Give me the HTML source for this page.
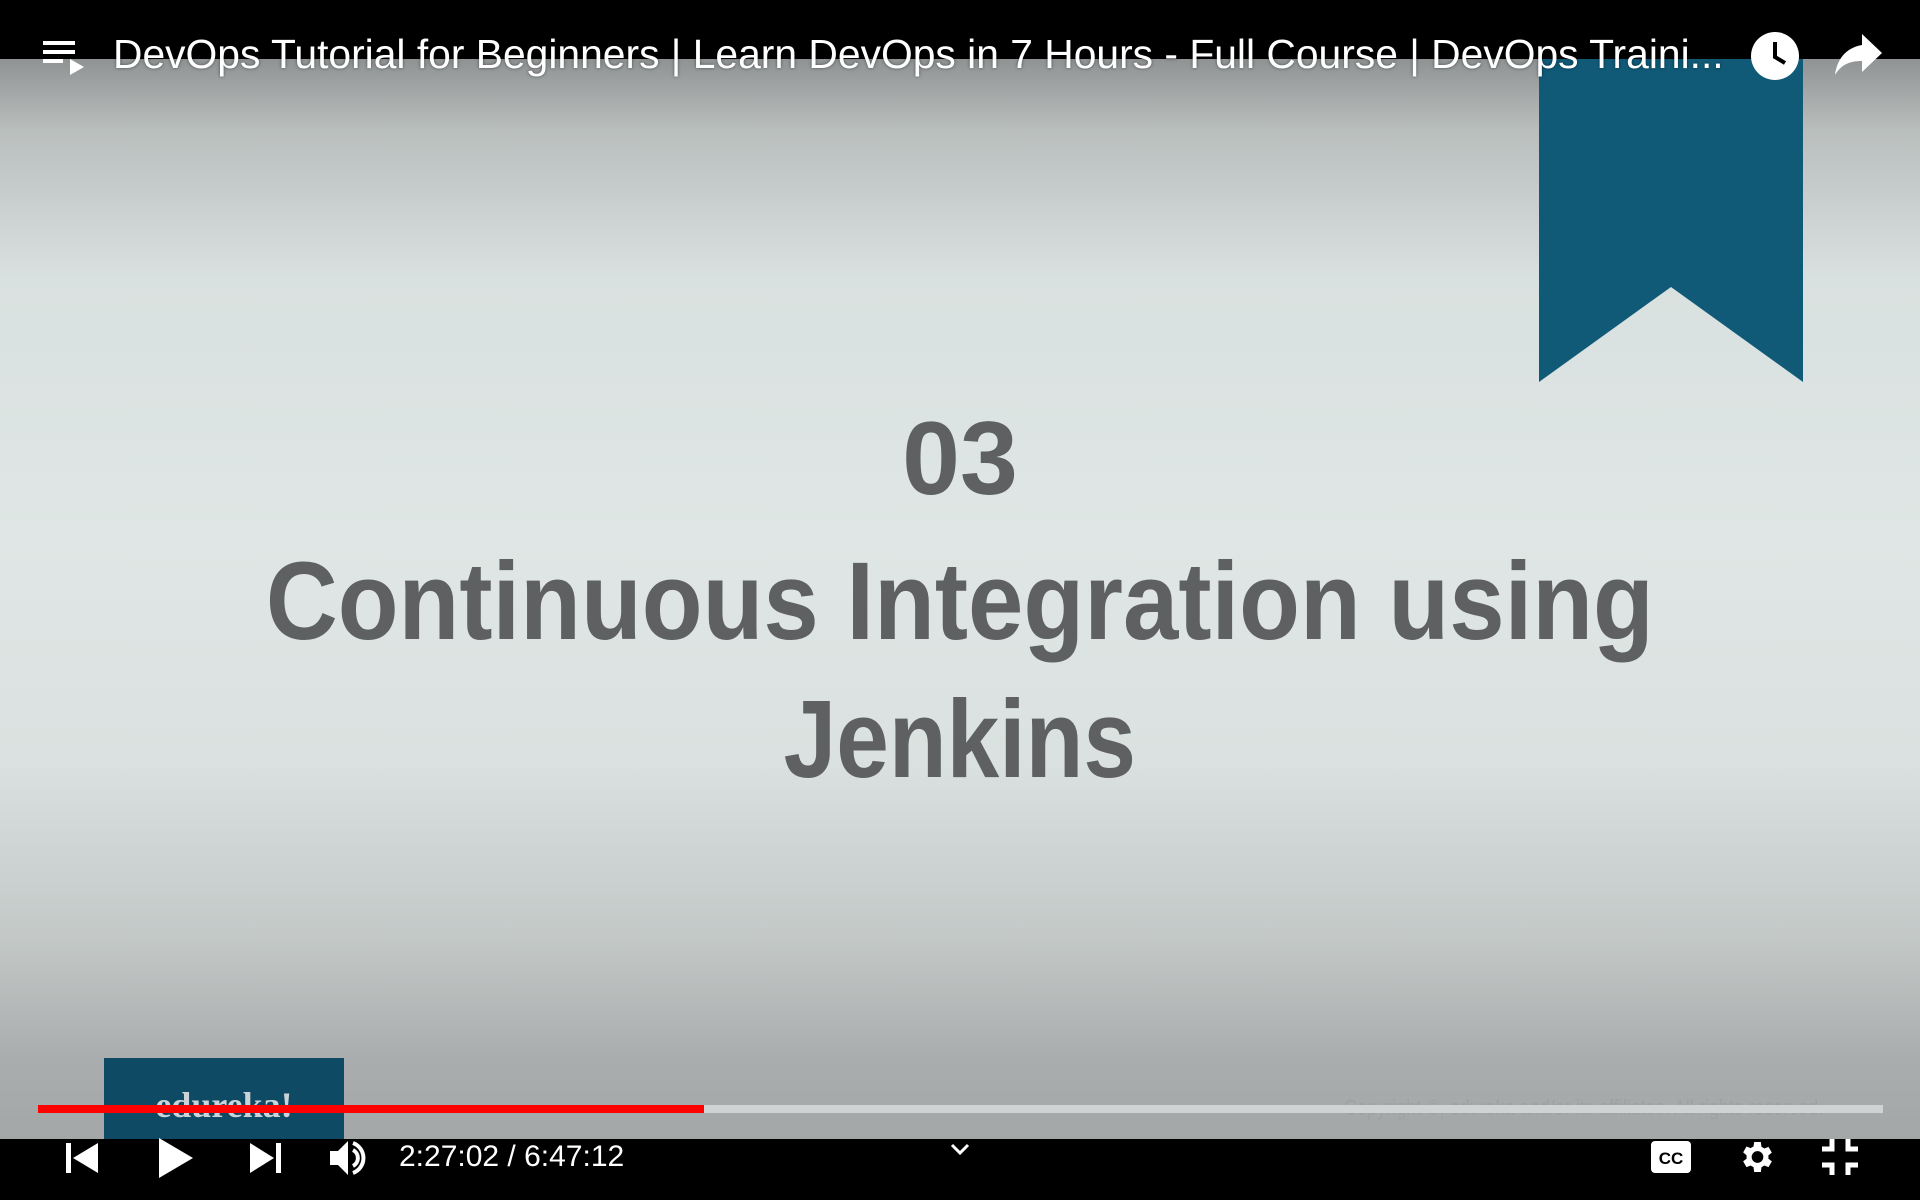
<!DOCTYPE html>
<html><head><meta charset="utf-8"><style>
html,body{margin:0;padding:0;width:1920px;height:1200px;overflow:hidden;background:#000;font-family:"Liberation Sans",sans-serif}
#vid{position:absolute;left:0;top:59px;width:1920px;height:1080px;background:linear-gradient(#8f9393 0px,#b9bebd 70px,#d9e1e0 220px,#dfe6e5 480px,#dae1e0 700px,#c3c8c7 880px,#a9adad 1000px,#a3a7a7 1080px)}
.t{position:absolute;left:0;width:1920px;text-align:center;color:#5e6062;font-weight:bold}
.t span{display:inline-block}
.w{fill:#fff}
</style></head><body>
<div id="vid">
 <svg style="position:absolute;left:1539px;top:0" width="264" height="324"><polygon points="0,0 264,0 264,323 132,228 0,323" fill="#105a78"/></svg>
 <div class="t" style="top:340px;font-size:104px;line-height:120px"><span style="transform:scaleX(1)">03</span></div>
 <div class="t" style="top:478px;font-size:110px;line-height:130px"><span style="transform:scaleX(.905)">Continuous Integration using</span></div>
 <div class="t" style="top:616px;font-size:110px;line-height:130px"><span style="transform:scaleX(.86)">Jenkins</span></div>
 <div style="position:absolute;left:104px;top:999px;width:240px;height:81px;background:#0e4a64;color:#c9d3d8;font-size:36px;font-weight:bold;font-family:'Liberation Serif',serif;text-align:center;padding-top:26px;box-sizing:border-box;overflow:hidden">edureka!</div>
 <div style="position:absolute;left:1344px;top:1036px;color:#9ea2a2;font-size:22px;white-space:nowrap;transform:scaleX(.82);transform-origin:left">Copyright ©, edureka and/or its affiliates. All rights reserved.</div>
 <div style="position:absolute;left:38px;top:1046px;width:1845px;height:8px;background:#cfd3d3"></div>
 <div style="position:absolute;left:38px;top:1046px;width:666px;height:8px;background:#f00"></div>
</div>
<svg style="position:absolute;left:42px;top:38px" width="46" height="44"><rect class="w" x="1" y="3" width="32" height="4"/><rect class="w" x="1" y="12" width="32" height="4"/><rect class="w" x="1" y="21" width="20" height="4"/><polygon class="w" points="28,21 42,29 28,37"/></svg>
<div style="position:absolute;left:113px;top:31px;color:#fff;font-size:40.8px;white-space:nowrap;text-shadow:0 0 3px rgba(0,0,0,.5)">DevOps Tutorial for Beginners | Learn DevOps in 7 Hours - Full Course | DevOps Traini...</div>
<svg style="position:absolute;left:1750px;top:31px" width="50" height="50"><circle cx="25" cy="25" r="24" fill="#fff"/><path d="M25 11v15l10 6" stroke="#000" stroke-width="4" fill="none"/></svg>
<svg style="position:absolute;left:1834px;top:32px" width="50" height="46"><path class="w" d="M28 2l20 19-20 19V29C15 29 7 33 1 43 3 28 11 16 28 13z"/></svg>
<svg style="position:absolute;left:64px;top:1141px" width="40" height="34"><rect class="w" x="2" y="2" width="5" height="30"/><polygon class="w" points="34,2 34,32 9,17"/></svg>
<svg style="position:absolute;left:157px;top:1136px" width="40" height="44"><polygon class="w" points="2,2 36,22 2,42"/></svg>
<svg style="position:absolute;left:248px;top:1141px" width="40" height="34"><polygon class="w" points="2,2 2,32 26,17"/><rect class="w" x="28" y="2" width="5" height="30"/></svg>
<svg style="position:absolute;left:328px;top:1139px" width="40" height="38"><polygon class="w" points="2,12 10,12 20,2 20,36 10,26 2,26"/><path d="M25 11a9 9 0 0 1 0 16M25 4a16 16 0 0 1 0 30" stroke="#fff" stroke-width="4" fill="none"/></svg>
<div style="position:absolute;left:399px;top:1140px;color:#fff;font-size:30px">2:27:02 / 6:47:12</div>
<svg style="position:absolute;left:950px;top:1143px" width="20" height="14"><path d="M2 2l8 8 8-8" stroke="#fff" stroke-width="3" fill="none"/></svg>
<svg style="position:absolute;left:1650px;top:1140px" width="42" height="34"><rect class="w" x="1" y="1" width="40" height="32" rx="4"/><text x="21" y="24" font-size="17" font-weight="bold" text-anchor="middle" fill="#000" font-family="Liberation Sans">CC</text></svg>
<svg style="position:absolute;left:1736px;top:1137px" width="40" height="40" viewBox="0 0 24 24"><path class="w" d="M19.4 13a7.5 7.5 0 0 0 0-2l2.1-1.6-2-3.5-2.5 1a7 7 0 0 0-1.7-1L14.9 3h-4l-.4 2.7a7 7 0 0 0-1.7 1l-2.5-1-2 3.5L6.4 11a7.5 7.5 0 0 0 0 2l-2.1 1.6 2 3.5 2.5-1a7 7 0 0 0 1.7 1l.4 2.9h4l.4-2.9a7 7 0 0 0 1.7-1l2.5 1 2-3.5zM12.9 15.5a3.5 3.5 0 1 1 0-7 3.5 3.5 0 0 1 0 7z"/></svg>
<svg style="position:absolute;left:1820px;top:1137px" width="40" height="40"><path d="M12 2v10H2M28 2v10h10M12 38V28H2M28 38V28h10" stroke="#fff" stroke-width="5" fill="none"/></svg>
</body></html>
